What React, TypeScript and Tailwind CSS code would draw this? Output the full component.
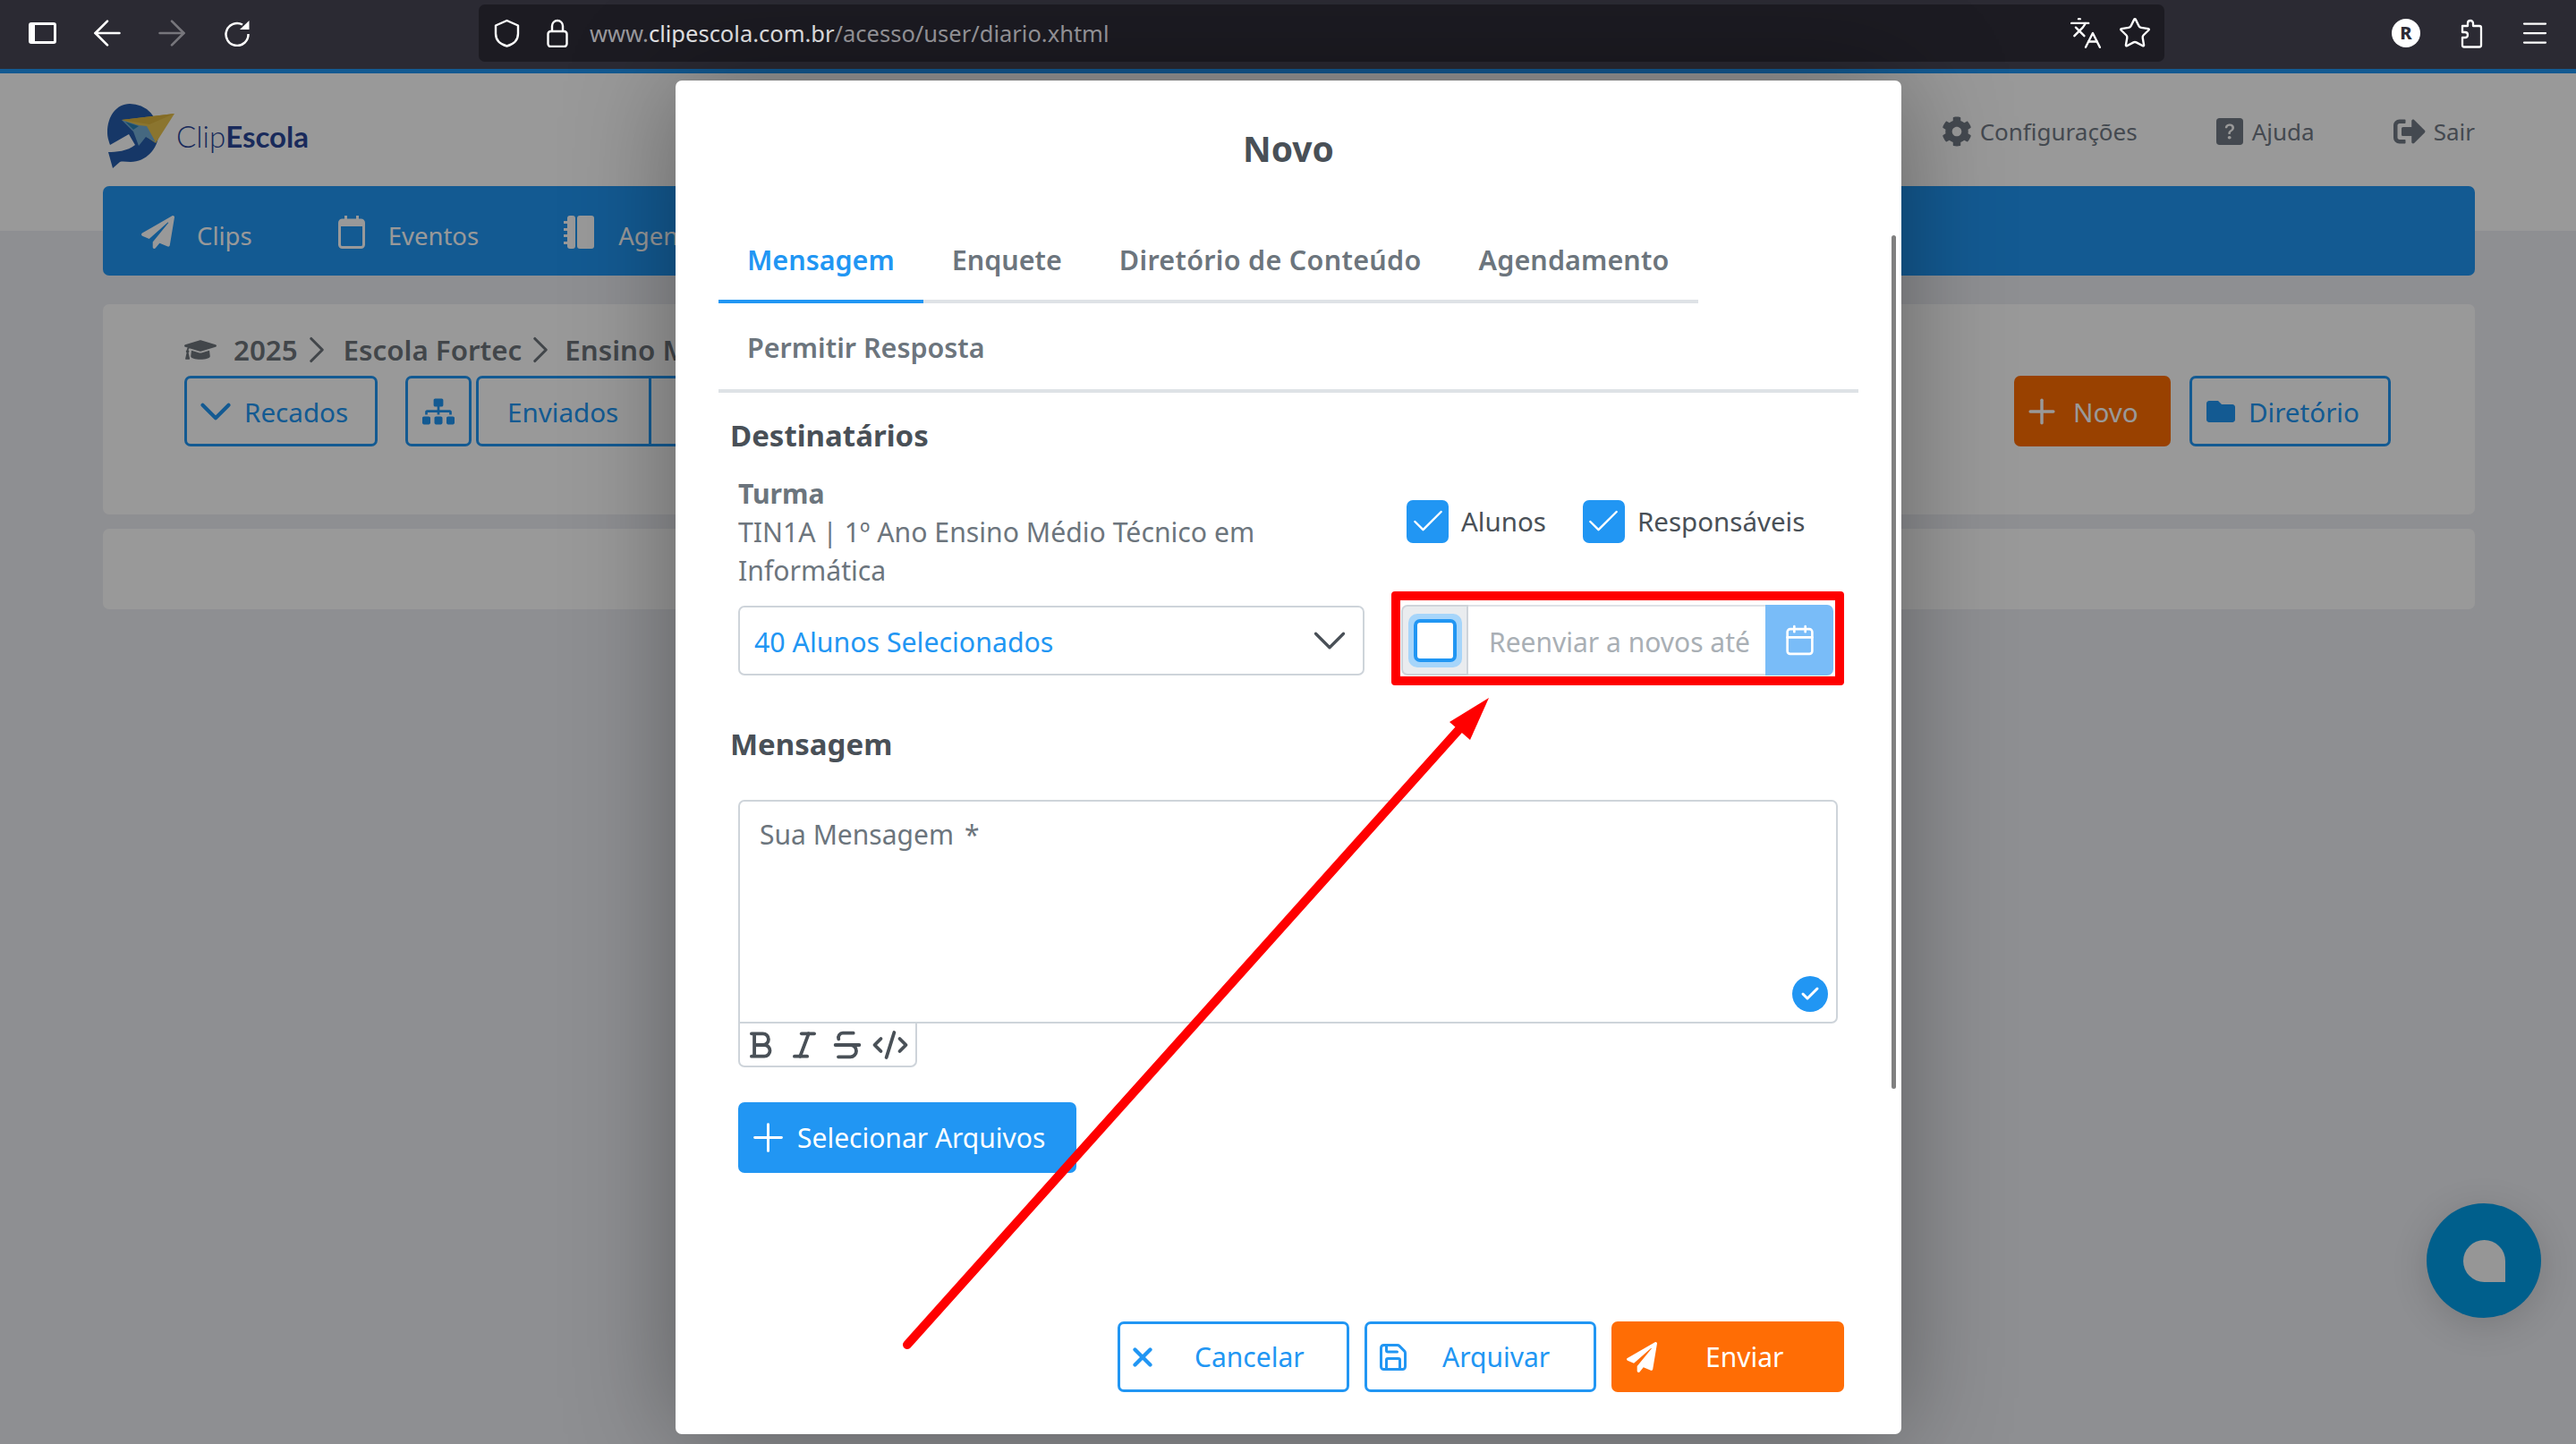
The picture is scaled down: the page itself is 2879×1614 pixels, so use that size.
import React from 'react';
import { ArrowLeft, ArrowRight, Languages, Star, Menu, ChevronDown, ChevronRight, Plus, X, Check, Calendar, Save, Italic, Strikethrough, CodeXml } from 'lucide-react';
import { FaPaperPlane, FaCog, FaSignOutAlt, FaSitemap, FaGraduationCap, FaFolder } from 'react-icons/fa';
import { BsQuestionSquareFill } from 'react-icons/bs';

const FONT = "font-['Noto_Sans','Open_Sans',sans-serif]";

function BrowserBar() {
    return (
        <div className="flex h-[77px] shrink-0 items-center bg-[#2b2a33] pb-[3px] text-white">
            <div className="ml-[32px] h-[24px] w-[31px] rounded-[3px] border-[3px] border-l-[7px] border-white" />
            <ArrowLeft className="ml-[34px] size-[46px]" strokeWidth={1.4} />
            <ArrowRight className="ml-[26px] size-[46px] text-[#77767c]" strokeWidth={1.4} />
            <svg viewBox="0 0 30 30" className="ml-[35px] size-[30px]" fill="none">
                <path d="M21 5.5A12.5 12.5 0 1 0 27.5 16" stroke="currentColor" strokeWidth="2.5" />
                <path d="M28.5 1v10H18z" fill="currentColor" />
            </svg>
            <div className="ml-[255px] flex h-[64px] w-[1884px] items-center rounded-[7px] bg-[#1c1b22] pl-[17px]">
                <svg viewBox="0 0 29 32" className="h-[32px] w-[29px]" fill="none" stroke="currentColor" strokeWidth="2.4">
                    <path d="M14.5 2L27 7.5v9c0 7-5 12-12.5 14C7 28.5 2 23.5 2 16.5v-9z" strokeLinejoin="round" />
                </svg>
                <svg viewBox="0 0 24 32" className="ml-[30px] h-[32px] w-[24px]" fill="none" stroke="currentColor" strokeWidth="2.4">
                    <rect x="1.5" y="14" width="21" height="17" rx="3" />
                    <path d="M6 14V8a6 6 0 0 1 12 0v6" />
                </svg>
                <div className="ml-[24px] flex-1 text-[25.5px] text-[#9a999e]">
                    www.<span className="text-[#e6e6e8]">clipescola.com.br</span>/acesso/user/diario.xhtml
                </div>
                <Languages className="size-[38px]" strokeWidth={1.5} />
                <Star className="ml-[17px] mr-[14px] size-[38px]" strokeWidth={1.5} />
            </div>
            <div className="ml-[254px] flex size-[32px] items-center justify-center rounded-full bg-white text-[20px] font-extrabold text-[#2b2a33]">R</div>
            <svg viewBox="0 0 26 33" className="ml-[44px] h-[33px] w-[26px]" fill="none" stroke="currentColor" strokeWidth="2.3">
                <path d="M12 2C10 2 9 3.5 9 5v3H3v7h3c4 0 4 6 0 6H3v8.500a2 2 0 0 0 2 2h17a2 2 0 0 0 2-2V10a2 2 0 0 0-2-2h-7V5c0-1.500-1-3-3-3z" strokeLinejoin="round" />
            </svg>
            <Menu className="ml-[40px] size-[36px]" strokeWidth={1.5} />
        </div>
    );
}

function Logo() {
    return (
        <div className="flex items-center">
            <svg viewBox="0 0 76 72" className="h-[72px] w-[76px]">
                <path d="M25 0a32 32 0 0 1 32 34c0 16-14 31-31 31-4 0-9-1-12 0l-8 7-5-18c8 0 22-1 30-8L24 34 3 46C1 40 0 37 0 32 0 14 10 0 25 0z" fill="#255cac" />
                <path d="M16 18l59-7-21 33z" fill="#e8c34f" />
                <path d="M16 18l31 5 28-12z" fill="#dcb43e" />
                <path d="M16 18l19 6 9 1 10 18-11-6-8 10-6-16z" fill="#74aed6" />
                <path d="M20 20l15 5-6 4z" fill="#2a82b4" />
            </svg>
            <div className="ml-[1px] font-['Lato',sans-serif] text-[33px] leading-none text-[#2b4798]">
                <span className="font-light">Clip</span><span className="font-bold">Escola</span>
            </div>
        </div>
    );
}

function TopLink({ icon, label, className }: { icon: React.ReactNode; label: string; className?: string }) {
    return (
        <div className={`flex items-center text-[26px] text-[#727a85] ${className ?? ''}`}>
            {icon}
            <span>{label}</span>
        </div>
    );
}

function NavItem({ icon, label, className }: { icon: React.ReactNode; label: string; className?: string }) {
    return (
        <div className={`flex items-center text-[27.5px] text-white ${className ?? ''}`}>
            {icon}
            <span>{label}</span>
        </div>
    );
}

function EventIcon() {
    return (
        <svg viewBox="0 0 30 37" className="mr-[26px] h-[37px] w-[30px]" fill="currentColor">
            <rect x="7" y="0" width="3" height="7" />
            <rect x="20" y="0" width="3" height="7" />
            <rect x="1.500" y="5" width="27" height="30.500" rx="3" fill="none" stroke="currentColor" strokeWidth="3" />
            <rect x="1.500" y="5" width="27" height="7" />
        </svg>
    );
}

function AgendaIcon() {
    return (
        <svg viewBox="0 0 34 37" className="mr-[27px] h-[37px] w-[34px]" fill="currentColor">
            <rect x="4" y="0" width="9" height="37" rx="3" />
            <rect x="15" y="0" width="19" height="37" rx="3" />
            <rect x="0" y="6" width="4" height="3" />
            <rect x="0" y="14" width="4" height="3" />
            <rect x="0" y="21" width="4" height="3" />
            <rect x="0" y="29" width="4" height="3" />
        </svg>
    );
}

function Page() {
    return (
        <div className="flex-1 border-t-[5px] border-[#2196f3] bg-[#edeef4]">
            <div className="h-[176px] bg-white">
                <div className="flex items-start justify-between pl-[120px] pr-[113px] pt-[34px]">
                    <Logo />
                    <div className="flex items-center pt-[12px]">
                        <TopLink icon={<FaCog className="mr-[9px] -mt-[2px] size-[34px]" />} label="Configurações" />
                        <TopLink icon={<BsQuestionSquareFill className="mr-[10px] -mt-[2px] size-[30px]" />} label="Ajuda" className="ml-[88px]" />
                        <TopLink icon={<FaSignOutAlt className="mr-[9px] -mt-[2px] size-[36px]" />} label="Sair" className="ml-[88px]" />
                    </div>
                </div>
            </div>
            <div className="-mt-[50px] ml-[115px] mr-[113px]">
                <div className="flex h-[100px] items-center rounded-[7px] bg-[#2196f3] pl-[43px] pt-[12px]">
                    <NavItem icon={<FaPaperPlane className="mr-[25px] -mt-[10px] size-[37px]" />} label="Clips" />
                    <NavItem icon={<div className="-mt-[10px]"><EventIcon /></div>} label="Eventos" className="ml-[96px]" />
                    <NavItem icon={<div className="-mt-[10px]"><AgendaIcon /></div>} label="Agenda" className="ml-[95px]" />
                </div>
                <div className="mt-[32px] h-[235px] rounded-[7px] bg-white pl-[91px] pr-[94px] pt-[29px]">
                    <div className="flex h-[44px] items-center text-[31.3px] font-semibold text-[#6e757c]">
                        <FaGraduationCap className="mr-[19px] size-[36px]" />
                        <span>2025</span>
                        <ChevronRight className="-ml-[4px] mr-[5px] size-[50px]" strokeWidth={1.5} />
                        <span>Escola Fortec</span>
                        <ChevronRight className="-ml-[4px] mr-[2px] size-[50px]" strokeWidth={1.5} />
                        <span>Ensino Médio</span>
                    </div>
                    <div className="mt-[7px] flex h-[79px] items-stretch text-[29.6px] text-[#2196f3]">
                        <div className="flex w-[216px] items-center rounded-[7px] border-[3px] border-[#2196f3] pl-[3px]">
                            <ChevronDown className="mr-[3px] size-[58px]" strokeWidth={1.7} /><span className="mt-[3px]">Recados</span>
                        </div>
                        <div className="ml-[31px] flex w-[74px] items-center justify-center rounded-[7px] border-[3px] border-[#2196f3]">
                            <FaSitemap className="size-[36px]" />
                        </div>
                        <div className="ml-[5px] flex w-[400px] items-center rounded-[7px] border-[3px] border-[#2196f3] pl-[32px]">
                            <span className="mt-[3px] w-[158px]">Enviados</span>
                            <span className="h-full border-l-[3px] border-[#2196f3]" />
                        </div>
                        <div className="ml-auto flex w-[175px] items-center rounded-[7px] bg-[#ff6d00] pl-[9px] text-white">
                            <Plus className="mr-[13px] size-[44px]" strokeWidth={1.9} /><span className="mt-[3px]">Novo</span>
                        </div>
                        <div className="ml-[21px] flex w-[225px] items-center rounded-[7px] border-[3px] border-[#2196f3] pl-[16px]">
                            <FaFolder className="mr-[15px] size-[32px]" /><span className="mt-[3px]">Diretório</span>
                        </div>
                    </div>
                </div>
                <div className="mt-[16px] h-[90px] rounded-[7px] bg-white" />
            </div>
        </div>
    );
}

function Tab({ label, active, className }: { label: string; active?: boolean; className?: string }) {
    return (
        <div className={`-mb-[4px] flex shrink-0 items-center whitespace-nowrap border-b-[4px] px-[32px] ${active ? 'border-[#2196f3] text-[#2196f3]' : 'border-transparent text-[#6c757d]'} ${className ?? ''}`}>
            {label}
        </div>
    );
}

function CheckBox({ label, className }: { label: string; className?: string }) {
    return (
        <div className={`flex items-center ${className ?? ''}`}>
            <div className="flex h-[48px] w-[47px] items-center justify-center rounded-[7px] bg-[#2196f3]">
                <Check className="size-[44px] text-white" strokeWidth={1.3} />
            </div>
            <span className="ml-[14px] text-[#495057]">{label}</span>
        </div>
    );
}

function Modal() {
    return (
        <div className="absolute left-[755px] top-[90px] flex h-[1513px] w-[1370px] flex-col rounded-[7px] bg-white text-[31px] text-[#495057] shadow-[0_0_120px_rgba(0,0,0,0.35)]">
            <div className="flex h-[152px] shrink-0 items-center justify-center text-[39px] font-bold">Novo</div>
            <div className="mx-[48px] mt-[4px] text-[30.5px] font-semibold">
                <div className="flex h-[93px] w-[1095px] border-b-[4px] border-[#dee2e6]">
                    <Tab label="Mensagem" active />
                    <Tab label="Enquete" />
                    <Tab label="Diretório de Conteúdo" className="tracking-[0.3px]" />
                    <Tab label="Agendamento" className="tracking-[0.1px]" />
                </div>
                <div className="flex h-[100px] w-[1274px] border-b-[4px] border-[#dee2e6]">
                    <Tab label="Permitir Resposta" className="pt-[4px]" />
                </div>
            </div>

            <div className="ml-[61px] flex h-[92px] items-center pt-[4px] text-[33px] font-bold">Destinatários</div>

            <div className="ml-[70px] flex">
                <div className="w-[700px]">
                    <div className="-mt-[1px] text-[30.2px] leading-[43px] text-[#6c757d]">
                        <b className="font-bold">Turma</b>
                        <div>TIN1A | 1º Ano Ensino Médio Técnico em</div>
                        <div>Informática</div>
                    </div>
                    <div className="mt-[18px] flex h-[78px] items-center justify-between rounded-[7px] border-[2px] border-[#ced4da] pl-[16px] pr-[6px] text-[30.3px] text-[#2196f3]">
                        <span className="mt-[4px]">40 Alunos Selecionados</span>
                        <ChevronDown className="size-[62px] text-[#495057]" strokeWidth={1.3} />
                    </div>
                </div>
                <div className="ml-[41px] w-[483px]">
                    <div className="ml-[6px] mt-[28px] flex h-[48px] items-center text-[29.5px]">
                        <CheckBox label="Alunos" />
                        <CheckBox label="Responsáveis" className="ml-[41px]" />
                    </div>
                    <div className="relative mt-[69px] flex h-[79px] text-[30px]">
                        <div className="flex w-[75px] items-center justify-center rounded-l-[7px] border-[2px] border-[#ced4da] bg-[#e9ecef]">
                            <div className="flex size-[60px] items-center justify-center rounded-[10px] bg-[#a6d5fa]">
                                <div className="size-[48px] rounded-[7px] border-[4px] border-[#2196f3] bg-white" />
                            </div>
                        </div>
                        <div className="flex w-[332px] items-center whitespace-nowrap border-y-[2px] border-[#dee2e6] pl-[23px] pt-[3px] text-[#a9afb5]">Reenviar a novos até</div>
                        <div className="flex w-[76px] items-center justify-center rounded-r-[7px] bg-[#79bcf8]">
                            <Calendar className="size-[37px] text-white" strokeWidth={1.7} />
                        </div>
                        <div className="pointer-events-none absolute -bottom-[11px] -left-[11px] -right-[12px] -top-[15px] rounded-[4px] border-[10px] border-[#ff0000]" />
                    </div>
                </div>
            </div>

            <div className="ml-[61px] mt-[53px] flex h-[48px] items-center text-[33px] font-bold">Mensagem</div>

            <div className="ml-[70px] mt-[38px] w-[1229px]">
                <div className="relative h-[250px] rounded-[7px] rounded-bl-none border-[2px] border-[#ced4da] pl-[22px] pt-[15px] text-[30px] leading-[44px] text-[#6c757d]">
                    Sua Mensagem<span className="ml-[12px]">*</span>
                    <div className="absolute bottom-[11px] right-[9px] flex size-[40px] items-center justify-center rounded-full bg-[#2196f3]">
                        <Check className="size-[24px] text-white" strokeWidth={3} />
                    </div>
                </div>
                <div className="flex h-[49px] w-[200px] items-center rounded-b-[7px] border-[2px] border-t-0 border-[#ced4da] pl-[5px] text-[#495057]">
                    <svg viewBox="0 0 24 24" className="size-[38px]" fill="none" stroke="currentColor" strokeWidth="2.4" strokeLinecap="round" strokeLinejoin="round">
                        <path d="M5 4h8a4 4 0 0 1 0 8H7h7a4 4 0 0 1 0 8H5M7 4v16" />
                    </svg>
                    <Italic className="ml-[10px] size-[38px]" strokeWidth={2.4} />
                    <Strikethrough className="ml-[9px] size-[40px]" strokeWidth={2.3} />
                    <CodeXml className="ml-[7px] size-[42px]" strokeWidth={2.2} />
                </div>
                <div className="mt-[39px] flex h-[79px] w-[378px] items-center rounded-[7px] bg-[#2196f3] pl-[8px] text-[30px] text-white">
                    <Plus className="mr-[7px] size-[51px]" strokeWidth={1.4} />Selecionar Arquivos
                </div>
            </div>

            <div className="mr-[64px] mt-[166px] flex justify-end gap-[17px] text-[30px]">
                <div className="flex h-[79px] w-[259px] items-center rounded-[7px] border-[3px] border-[#2196f3] pl-[8px] text-[#2196f3]">
                    <X className="size-[34px]" strokeWidth={3} /><span className="ml-[41px]">Cancelar</span>
                </div>
                <div className="flex h-[79px] w-[259px] items-center rounded-[7px] border-[3px] border-[#2196f3] pl-[11px] text-[#2196f3]">
                    <Save className="size-[36px]" strokeWidth={2} /><span className="ml-[37px]">Arquivar</span>
                </div>
                <div className="flex h-[79px] w-[260px] items-center rounded-[7px] bg-[#ff6d05] pl-[17px] text-white">
                    <FaPaperPlane className="size-[34px]" /><span className="ml-[54px]">Enviar</span>
                </div>
            </div>

            <div className="absolute left-[1359px] top-[173px] h-[954px] w-[5px] rounded-full bg-[#808080]" />
        </div>
    );
}

export default function App() {
    return (
        <div className={`relative flex h-[1614px] w-[2879px] flex-col overflow-hidden ${FONT}`}>
            <BrowserBar />
            <div className="relative flex flex-1 flex-col">
                <Page />
                {/* backdrop */}
                <div className="absolute inset-0 bg-black/40" />
            </div>
            <div className="absolute bottom-[141px] right-[39px] flex size-[128px] items-center justify-center rounded-full bg-[#005f8c] shadow-[0_8px_40px_rgba(0,0,0,0.15)]">
                <div className="size-[47px] rounded-full rounded-br-none bg-[#969696]" />
            </div>
            <Modal />
            {/* red annotation arrow */}
            <svg className="pointer-events-none absolute left-0 top-0" width="2879" height="1614">
                <path d="M1014 1503L1630 816" stroke="#ff0000" strokeWidth="10" strokeLinecap="round" />
                <path d="M1664 780L1620 807L1643 827Z" fill="#ff0000" />
            </svg>
        </div>
    );
}
